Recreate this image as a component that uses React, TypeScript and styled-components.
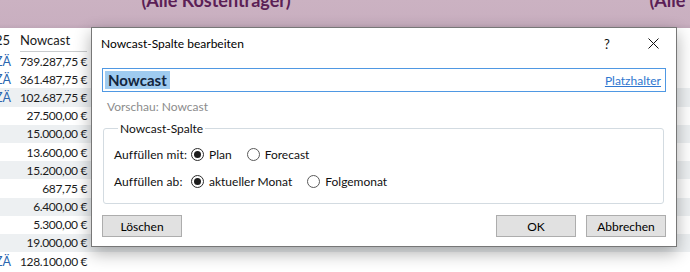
import React from 'react';
import styled, { createGlobalStyle } from 'styled-components';

const GlobalStyle = createGlobalStyle`
    html, body {
        margin: 0;
        padding: 0;
        background: #ffffff;
    }
    body {
        font-family: Lato, "Liberation Sans", sans-serif;
        color: #1b1b1b;
    }
`

const UI_FONT = `Lato, "Liberation Sans", sans-serif`;

const Page = styled.div`
    position: relative;
    width: 690px;
    height: 272px;
    overflow: hidden;
    background: #ffffff;
`
const Band = styled.div`
    height: 28px;
    overflow: hidden;
    display: grid;
    grid-template-columns: 432px 584px;
    background: linear-gradient(#cbb2c2, #c9afc0 85%, #bfa6b7);
`
const BandTitle = styled.div`
    margin-top: -10px;
    text-align: center;
    font-family: ${UI_FONT};
    font-weight: 700;
    font-size: 18px;
    line-height: 20px;
    color: #5b1f56;
    white-space: nowrap;
`
const Table = styled.div`
    display: flex;
    flex-direction: column;
`
const HeaderRow = styled.div`
    height: 24px;
    display: grid;
    grid-template-columns: 20px 67px;
    align-items: center;
    font-size: 13px;
`
const HeaderCell = styled.div<{ $underline?: boolean }>`
    height: 22px;
    line-height: 22px;
    white-space: nowrap;
    overflow: hidden;
    border-bottom: 1px solid ${p => (p.$underline ? '#c9ccce' : 'transparent')};
    direction: ${p => (p.$underline ? 'ltr' : 'rtl')};
    padding-right: ${p => (p.$underline ? '0' : '10px')};
`
const Row = styled.div<{ $striped?: boolean }>`
    height: 18.2px;
    display: grid;
    grid-template-columns: 20px 67px;
    align-items: center;
    font-size: 12px;
    background: ${p => (p.$striped ? '#edf0f2' : '#ffffff')};
`
const TagCell = styled.div`
    color: #2c67b0;
    overflow: hidden;
    white-space: nowrap;
    direction: rtl;
    padding-right: 9px;
    font-size: 12.5px;
`
const ValueCell = styled.div`
    text-align: right;
    white-space: nowrap;
    letter-spacing: -0.35px;
`

const Dialog = styled.div`
    position: absolute;
    left: 91px;
    top: 27px;
    width: 586px;
    height: 220px;
    box-sizing: border-box;
    background: #ffffff;
    border: 1px solid #777777;
    box-shadow: 0 6px 16px rgba(0, 0, 0, 0.32);
    display: flex;
    flex-direction: column;
    font-family: ${UI_FONT};
    font-size: 12px;
`
const TitleBar = styled.div`
    height: 31px;
    display: flex;
    align-items: center;
    padding-left: 9px;
`
const Title = styled.div`
    flex: 1;
    color: #000000;
`
const TitleButton = styled.div`
    width: 46px;
    height: 31px;
    display: flex;
    align-items: center;
    justify-content: center;
    color: #111111;
    font-size: 13px;
`
const Body = styled.div`
    flex: 1;
    display: flex;
    flex-direction: column;
    padding: 9px 10px 9px 10px;
`
const NameBox = styled.div`
    height: 24px;
    box-sizing: border-box;
    border: 1px solid #4f98e3;
    display: flex;
    align-items: center;
    padding: 0 4px 0 2px;
`
const NameText = styled.span`
    background: #9fcbf0;
    color: #13253d;
    font-size: 15px;
    font-weight: 700;
    line-height: 18px;
    padding: 0 3px;
`
const Spacer = styled.div`
    flex: 1;
`
const LinkText = styled.a`
    color: #2f77d0;
    text-decoration: underline;
    cursor: pointer;
`
const Preview = styled.div`
    margin: 7px 0 0 5px;
    color: #8c8c8c;
    height: 16px;
    line-height: 16px;
`
const Group = styled.fieldset`
    margin: 6px 2px 0 1px;
    padding: 11px 10px 14px 10px;
    border: 1px solid #d3dbe1;
    border-radius: 3px;
    display: grid;
    grid-template-columns: 77px auto;
    row-gap: 12px;
    align-items: center;
`
const GroupLegend = styled.legend`
    padding: 0 2px;
    margin-left: 4px;
    color: #111111;
`
const FieldLabel = styled.div`
    color: #111111;
    white-space: nowrap;
    letter-spacing: 0.1px;
`
const Options = styled.div`
    display: flex;
    align-items: center;
    gap: 15px;
`
const Option = styled.label`
    display: flex;
    align-items: center;
    gap: 5px;
    color: #111111;
    white-space: nowrap;
`
const RadioCircle = styled.span<{ $checked?: boolean }>`
    width: 13px;
    height: 13px;
    box-sizing: border-box;
    border-radius: 50%;
    border: 1px solid ${p => (p.$checked ? '#2b2b2b' : '#5a5a5a')};
    display: flex;
    align-items: center;
    justify-content: center;
    &::after {
        content: '';
        width: 7px;
        height: 7px;
        border-radius: 50%;
        background: ${p => (p.$checked ? '#1c1c1c' : 'transparent')};
    }
`
const Footer = styled.div`
    display: flex;
    align-items: center;
    gap: 10px;
    margin-top: 11px;
`
const DialogButton = styled.button`
    width: 80px;
    height: 22px;
    box-sizing: border-box;
    background: #e1e1e1;
    border: 1px solid #adadad;
    font-family: ${UI_FONT};
    font-size: 12px;
    color: #000000;
    padding: 0;
`

const rows: { tag?: string; value: string }[] = [
    { tag: 'ZÄ', value: '739.287,75 €' },
    { tag: 'ZÄ', value: '361.487,75 €' },
    { tag: 'ZÄ', value: '102.687,75 €' },
    { value: '27.500,00 €' },
    { value: '15.000,00 €' },
    { value: '13.600,00 €' },
    { value: '15.200,00 €' },
    { value: '687,75 €' },
    { value: '6.400,00 €' },
    { value: '5.300,00 €' },
    { value: '19.000,00 €' },
    { tag: 'ZÄ', value: '128.100,00 €' },
];

const Radio: React.FC<{ label: string; checked?: boolean }> = ({ label, checked }) => (
    <Option>
        <RadioCircle $checked={checked} />
        {label}
    </Option>
);

const CloseIcon = () => (
    <svg width="11" height="11" viewBox="0 0 11 11">
        <path d="M0.5 0.5 L10.5 10.5 M10.5 0.5 L0.5 10.5" stroke="#111" strokeWidth="1" />
    </svg>
);

const App: React.FC = () => {
    return (
        <Page>
            <GlobalStyle />
            <Band>
                <BandTitle>(Alle Kostenträger)</BandTitle>
                <BandTitle>(Alle Kostenträger)</BandTitle>
            </Band>
            <Table>
                <HeaderRow>
                    <HeaderCell>2025</HeaderCell>
                    <HeaderCell $underline>Nowcast</HeaderCell>
                </HeaderRow>
                {rows.map((r, i) => (
                    <Row key={i} $striped={i % 2 === 0 && i > 0}>
                        <TagCell>{r.tag ? 'ZÄ' : ''}</TagCell>
                        <ValueCell>{r.value}</ValueCell>
                    </Row>
                ))}
            </Table>

            <Dialog>
                <TitleBar>
                    <Title>Nowcast-Spalte bearbeiten</Title>
                    <TitleButton>?</TitleButton>
                    <TitleButton><CloseIcon /></TitleButton>
                </TitleBar>
                <Body>
                    <NameBox>
                        <NameText>Nowcast</NameText>
                        <Spacer />
                        <LinkText>Platzhalter</LinkText>
                    </NameBox>
                    <Preview>Vorschau: Nowcast</Preview>
                    <Group>
                        <GroupLegend>Nowcast-Spalte</GroupLegend>
                        <FieldLabel>Auffüllen mit:</FieldLabel>
                        <Options>
                            <Radio label="Plan" checked />
                            <Radio label="Forecast" />
                        </Options>
                        <FieldLabel>Auffüllen ab:</FieldLabel>
                        <Options>
                            <Radio label="aktueller Monat" checked />
                            <Radio label="Folgemonat" />
                        </Options>
                    </Group>
                    <Footer>
                        <DialogButton>Löschen</DialogButton>
                        <Spacer />
                        <DialogButton>OK</DialogButton>
                        <DialogButton>Abbrechen</DialogButton>
                    </Footer>
                </Body>
            </Dialog>
        </Page>
    );
};

export default App;
